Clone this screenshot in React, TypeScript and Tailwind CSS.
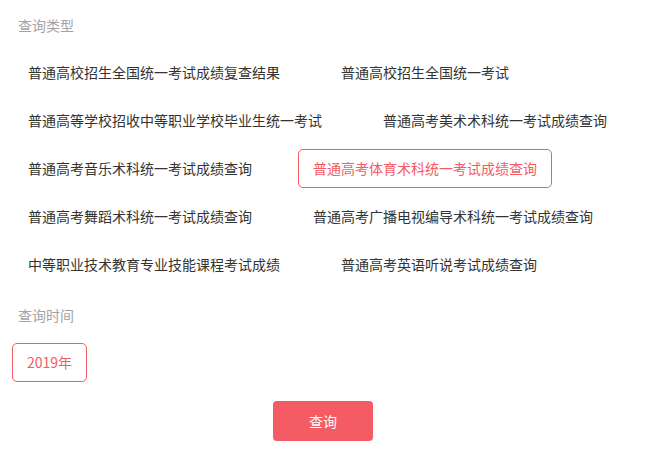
import React from "react";

const items = [
  "普通高校招生全国统一考试成绩复查结果",
  "普通高校招生全国统一考试",
  "普通高等学校招收中等职业学校毕业生统一考试",
  "普通高考美术术科统一考试成绩查询",
  "普通高考音乐术科统一考试成绩查询",
  "普通高考体育术科统一考试成绩查询",
  "普通高考舞蹈术科统一考试成绩查询",
  "普通高考广播电视编导术科统一考试成绩查询",
  "中等职业技术教育专业技能课程考试成绩",
  "普通高考英语听说考试成绩查询",
];

export default function App() {
  return (
    <div
      className="w-[648px] h-[453px] bg-white px-3 pt-[15px]"
      style={{ fontFamily: '"Noto Sans CJK SC", "Noto Sans", sans-serif' }}
    >
      <div className="pl-[6px] text-[14px] leading-[20px] text-[#a3a3a3]">查询类型</div>
      <div className="mt-[18px] pl-px flex flex-wrap gap-x-[31px] gap-y-[9px]">
        {items.map((t, i) => (
          <div
            key={t}
            className={
              i === 5
                ? "h-[39px] px-[14px] flex items-center border border-[#f45b65] rounded-[5px] text-[14px] text-[#f45b65] whitespace-nowrap"
                : "h-[39px] px-[14px] flex items-center border border-transparent rounded-[5px] text-[14px] text-[#333] whitespace-nowrap"
            }
          >
            {t}
          </div>
        ))}
      </div>
      <div className="mt-[21px] pl-[6px] text-[14px] leading-[20px] text-[#a3a3a3]">查询时间</div>
      <div className="mt-[18px] flex">
        <div className="h-[39px] px-[14px] flex items-center border border-[#f45b65] rounded-[5px] text-[14px] text-[#f45b65]">
          2019年
        </div>
      </div>
      <div className="mt-[19px] pr-[2px] flex justify-center">
        <button className="w-[100px] h-[40px] rounded-[4px] bg-[#f45b65] text-white text-[14px] flex items-center justify-center">
          查询
        </button>
      </div>
    </div>
  );
}
